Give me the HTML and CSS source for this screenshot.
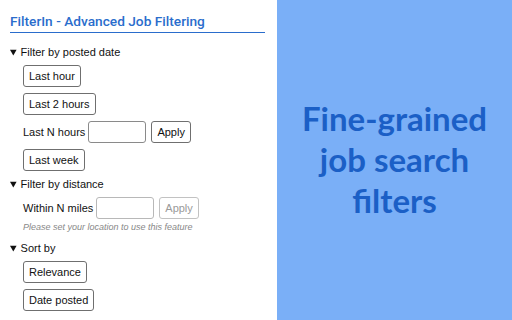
FILE: index.html
```html
<!DOCTYPE html>
<html lang="en">
  <head>
    <meta charset="UTF-8" />
    <meta name="viewport" content="width=device-width, initial-scale=1.0" />
    <title>FilterIn</title>
    <link rel="stylesheet" href="styles.css">
  </head>
  <body>
    <div class="page">
      <div class="popup">
        <h1 class="title">FilterIn - Advanced Job Filtering</h1>

        <details class="group" open>
          <summary>Filter by posted date</summary>
          <div class="options">
            <div class="row"><button class="btn">Last hour</button></div>
            <div class="row"><button class="btn">Last 2 hours</button></div>
            <div class="row">
              <span class="label">Last N hours</span>
              <input class="num" type="text" />
              <button class="btn">Apply</button>
            </div>
            <div class="row"><button class="btn">Last week</button></div>
          </div>
        </details>

        <details class="group" open>
          <summary>Filter by distance</summary>
          <div class="options">
            <div class="row">
              <span class="label">Within N miles</span>
              <input class="num" type="text" disabled />
              <button class="btn" disabled>Apply</button>
            </div>
            <p class="note">Please set your location to use this feature</p>
          </div>
        </details>

        <details class="group" open>
          <summary>Sort by</summary>
          <div class="options">
            <div class="row"><button class="btn">Relevance</button></div>
            <div class="row"><button class="btn">Date posted</button></div>
          </div>
        </details>
      </div>

      <div class="promo">
        <p class="tagline">Fine-grained<br>job search<br>filters</p>
      </div>
    </div>
  </body>
</html>
```

FILE: styles.css
```css
/* ---- RESET ---- */
* {
  padding: 0;
  margin: 0;
  box-sizing: border-box;
}

body {
  font-family: "Liberation Sans", Arial, sans-serif;
  color: #111;
}

.page {
  display: flex;
  width: 512px;
  height: 320px;
  overflow: hidden;
}

/* ---- POPUP ---- */
.popup {
  width: 277px;
  flex-shrink: 0;
  background: #ffffff;
  padding: 13px 12px 0 10px;
}

.title {
  font-family: Roboto, "Liberation Sans", sans-serif;
  font-size: 13.7px;
  font-weight: 500;
  color: #2a6dcc;
  padding-bottom: 3px;
  border-bottom: 1.5px solid #2a6dcc;
  margin-bottom: 12px;
}

.group summary {
  font-size: 11px;
  line-height: 14px;
  cursor: pointer;
  margin-bottom: 5px;
}

.group summary::marker {
  font-size: 10px;
}

.options {
  display: flex;
  flex-direction: column;
  gap: 6px;
  padding-left: 13px;
  margin-bottom: 6px;
}

.row {
  display: flex;
  align-items: center;
  gap: 5px;
  font-size: 11px;
}

.label {
  margin-right: -2px;
}

.btn {
  font-family: inherit;
  font-size: 11px;
  color: #111;
  background: #ffffff;
  border: 1px solid #6f6f6f;
  border-radius: 3px;
  padding: 0 5px;
  height: 22px;
}

.btn:disabled {
  color: #9a9a9a;
  border-color: #c2c2c2;
}

.num {
  width: 58px;
  height: 22px;
  border: 1px solid #8a8a8a;
  border-radius: 3px;
  background: #ffffff;
}

.num:disabled {
  border-color: #b8b8b8;
}

.note {
  font-size: 9px;
  font-style: italic;
  color: #888;
  margin-top: -3px;
  margin-bottom: 3px;
}

/* ---- PROMO ---- */
.promo {
  flex: 1;
  background: #7aaff7;
  display: flex;
  align-items: center;
  justify-content: center;
}

.tagline {
  font-family: Lato, sans-serif;
  font-weight: bold;
  font-size: 33px;
  line-height: 41px;
  color: #1b5fc6;
  text-align: center;
  margin-top: -2px;
}
```
